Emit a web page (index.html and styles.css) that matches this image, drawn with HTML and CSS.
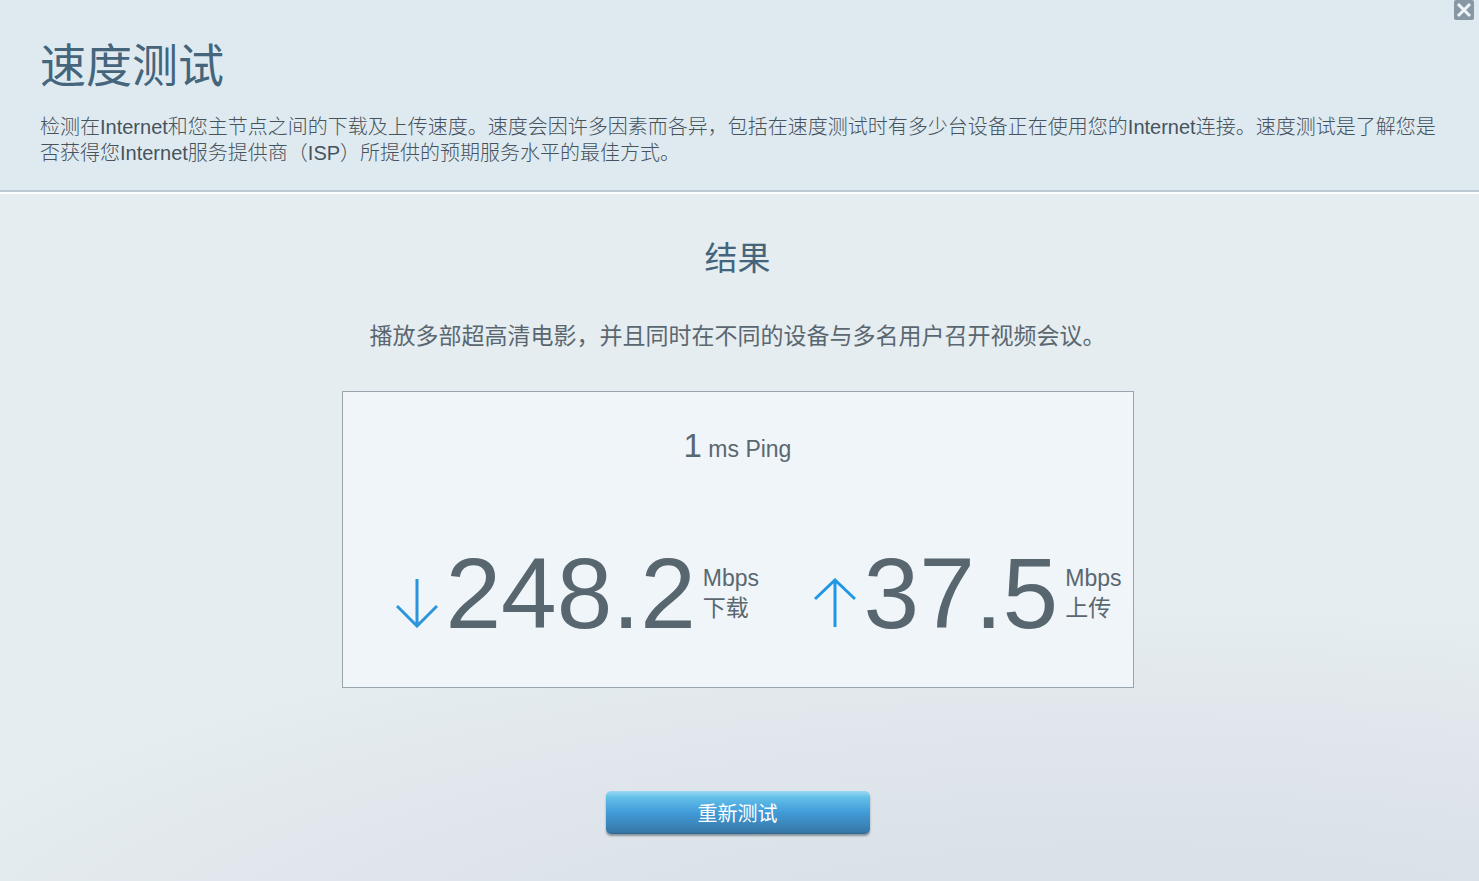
FILE: index.html
```
<!DOCTYPE html>
<html lang="zh-CN">
<head>
    <meta charset="utf-8">
    <meta name="viewport" content="width=device-width, initial-scale=1.0">
    <title>速度测试</title>
    <link rel="stylesheet" href="styles.css">
</head>
<body>
    <header class="header">
        <h1>速度测试</h1>
        <p>检测在Internet和您主节点之间的下载及上传速度。速度会因许多因素而各异，包括在速度测试时有多少台设备正在使用您的Internet连接。速度测试是了解您是否获得您Internet服务提供商（ISP）所提供的预期服务水平的最佳方式。</p>
        <button class="close" type="button" aria-label="关闭">
            <svg width="20" height="20" viewBox="0 0 20 20">
                <rect width="20" height="20" rx="2" fill="#8797a3"/>
                <path d="M4 4L16 16M16 4L4 16" stroke="#eef5f9" stroke-width="3"/>
            </svg>
        </button>
    </header>
    <main class="content">
        <h2>结果</h2>
        <p class="summary">播放多部超高清电影，并且同时在不同的设备与多名用户召开视频会议。</p>
        <section class="results">
            <p class="ping"><span class="ping-value">1</span> ms Ping</p>
            <div class="speeds">
                <div class="speed">
                    <svg class="arrow" width="42" height="50" viewBox="0 0 42 50">
                        <path d="M21 1V48M1 28L21 48L41 28" fill="none" stroke="#2b95dc" stroke-width="3"/>
                    </svg>
                    <span class="value">248.2</span>
                    <span class="unit">Mbps<br>下载</span>
                </div>
                <div class="speed">
                    <svg class="arrow" width="42" height="50" viewBox="0 0 42 50">
                        <path d="M21 49V2M1 21L21 2L41 21" fill="none" stroke="#1f97e6" stroke-width="3"/>
                    </svg>
                    <span class="value">37.5</span>
                    <span class="unit">Mbps<br>上传</span>
                </div>
            </div>
        </section>
        <button class="retest" type="button">重新测试</button>
    </main>
</body>
</html>
```
FILE: styles.css
```
* {
    box-sizing: border-box;
}
body {
    margin: 0;
    min-height: 100vh;
    display: flex;
    flex-direction: column;
    font-family: "Liberation Sans", "Noto Sans CJK SC", sans-serif;
    color: #5b6770;
    background-color: #e5edf0;
}
h1, h2, p {
    margin: 0;
    font-weight: normal;
}
.header {
    position: relative;
    padding: 36px 40px 24px;
    background-color: #dfeaf0;
    border-bottom: 2px solid #bdc9d2;
}
.header h1 {
    font-size: 46px;
    line-height: 60px;
    color: #44657c;
}
.header p {
    margin-top: 18px;
    font-size: 20px;
    line-height: 26px;
    font-weight: 300;
    color: #46535d;
}
.close {
    position: absolute;
    top: 0;
    right: 5px;
    padding: 0;
    border: none;
    background: none;
    cursor: pointer;
}
.close svg {
    display: block;
}
.content {
    flex: 1;
    display: flex;
    flex-direction: column;
    align-items: center;
    padding: 40px 4px 44px 0;
    border-top: 2px solid #fbfdfe;
    background: radial-gradient(ellipse 90% 58% at 76% 118%, #d6dfe7 0%, #dbe2e9 45%, #e1e7ec 75%, #e5edf0 100%);
}
.content h2 {
    font-size: 33px;
    line-height: 50px;
    color: #44657c;
}
.summary {
    margin-top: 34px;
    font-size: 23px;
    line-height: 36px;
}
.results {
    width: 792px;
    max-width: 100%;
    margin-top: 37px;
    padding: 34px 11px 40px 53px;
    border: 1px solid #98a5ae;
    background-color: #eff5f8;
}
.ping {
    margin-right: 42px;
    text-align: center;
    font-size: 23px;
    line-height: 40px;
}
.ping-value {
    font-size: 33px;
}
.speeds {
    display: flex;
    justify-content: space-between;
    margin-top: 70px;
}
.speed {
    display: flex;
    align-items: center;
}
.arrow {
    margin-top: 20px;
}
.value {
    margin: 0 7px 0 8px;
    font-size: 100px;
    line-height: 108px;
    color: #58666f;
}
.unit {
    font-size: 23px;
    line-height: 30px;
}
.retest {
    width: 264px;
    height: 43px;
    margin-top: 103px;
    border: none;
    border-radius: 5px;
    font-family: inherit;
    font-size: 20px;
    color: #fff;
    background: linear-gradient(#9bd9f1, #62c0e8 15%, #419bd8 50%, #3779a9 95%, #2f6690);
    box-shadow: 0 2px 2px #8b949b;
    cursor: pointer;
}
.retest:hover {
    background: linear-gradient(#a8e0f5, #70c9ee 15%, #4da6e0 50%, #3f84b6);
}
```
